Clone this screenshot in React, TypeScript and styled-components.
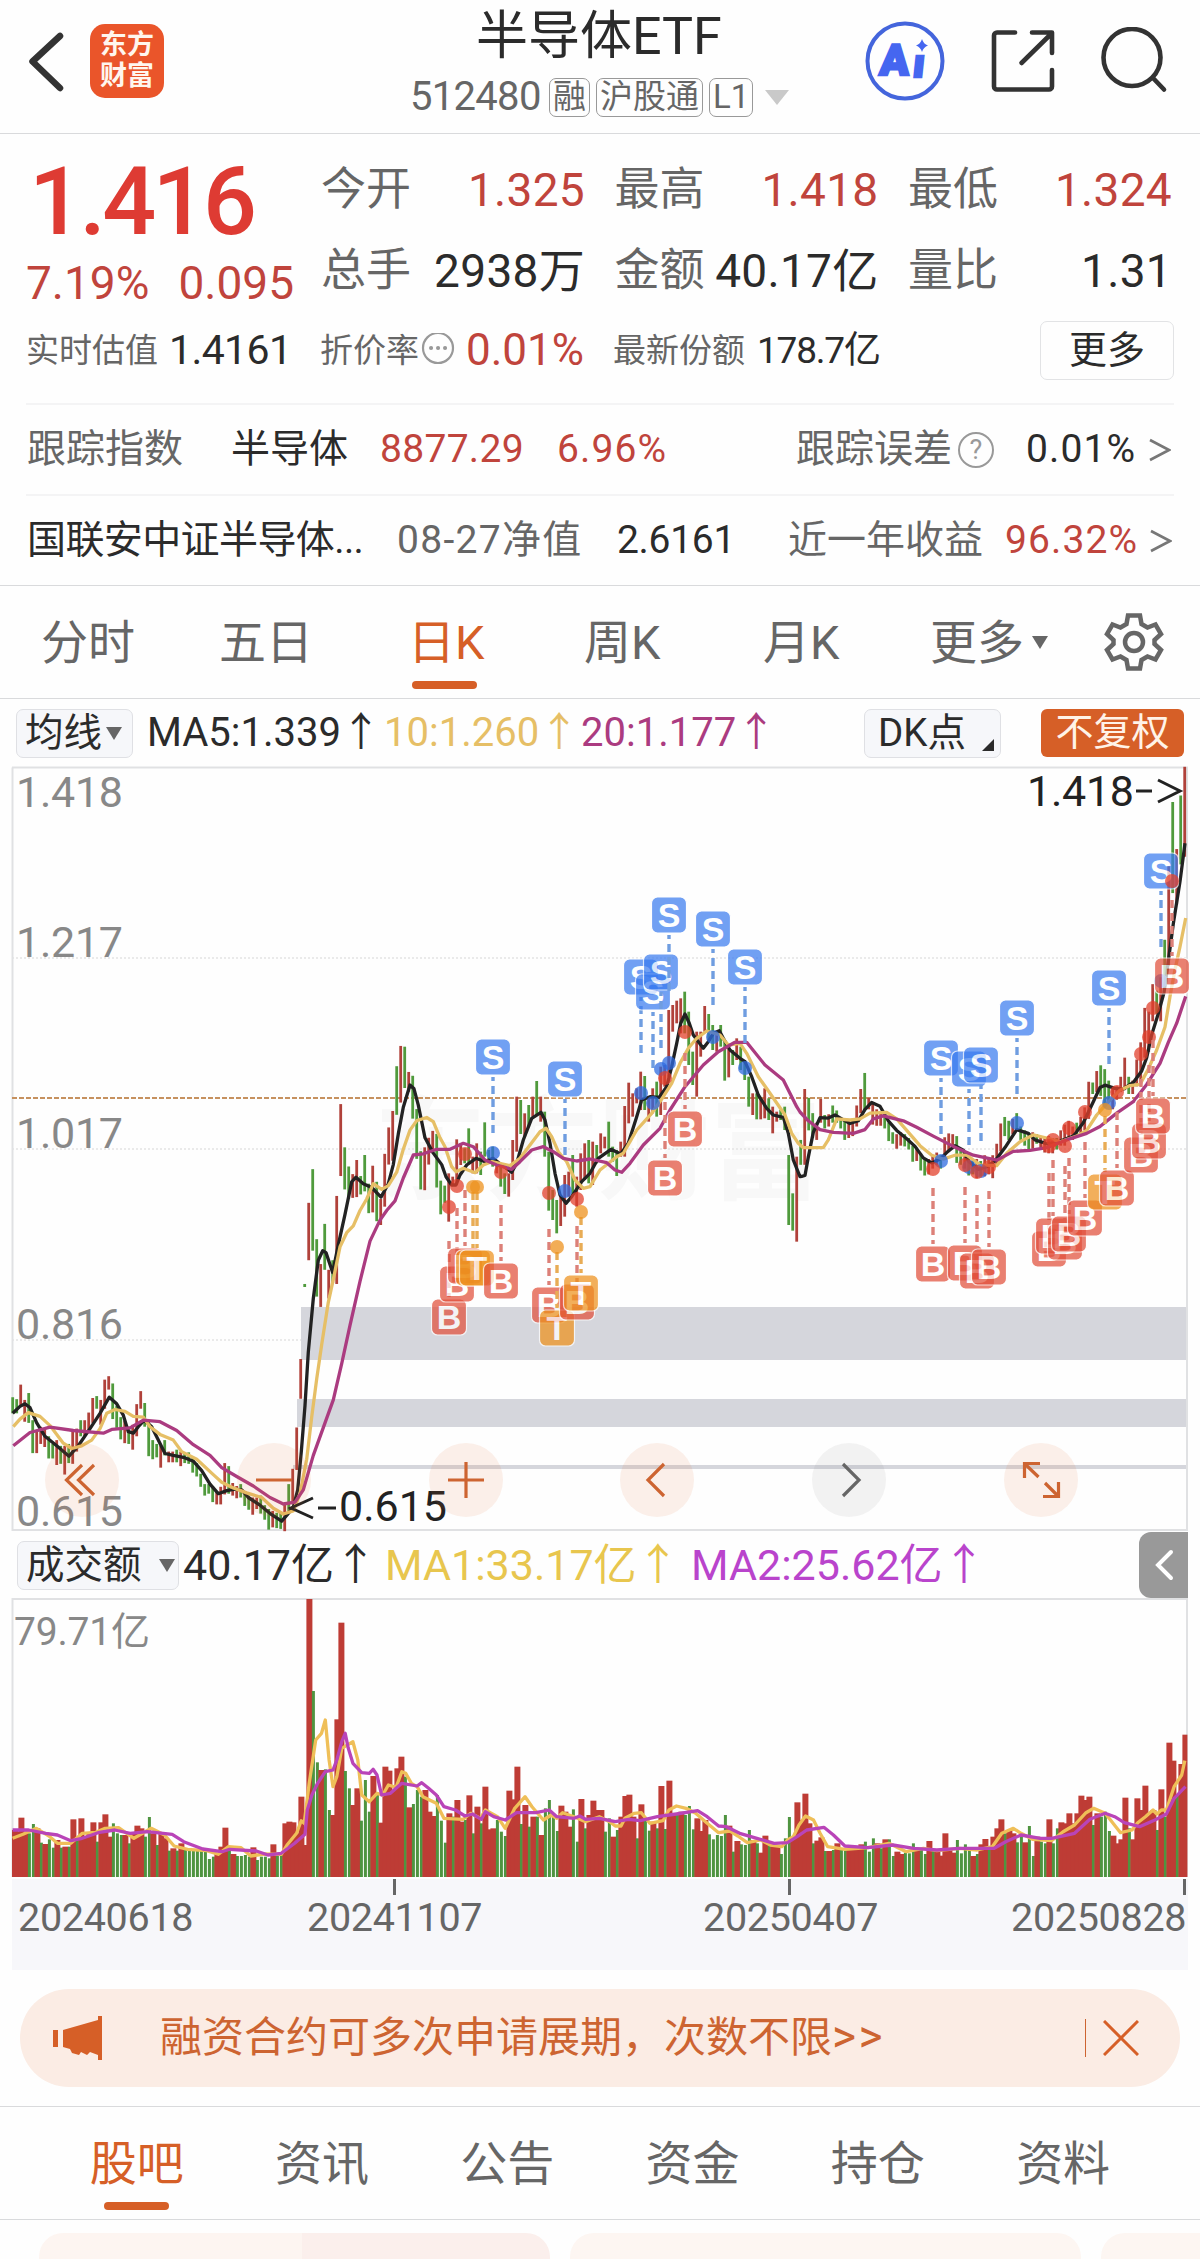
import { Fragment } from 'react';
import styled, { createGlobalStyle, css } from 'styled-components';

const GlobalStyle = createGlobalStyle`
	:root {
		--ink: #2b2b2b;
		--gray: #666;
		--red: #c0443c;
		--orange: #d65f27;
		--line: #d9dadc;
		--yellow: #e6bf66;
		--purple: #ab3b80;
	}

	* {
		box-sizing: border-box;
	}

	body {
		margin: 0;
		background: #fefefe;
		color: var(--ink);
		font-family: Roboto, 'Noto Sans CJK SC', sans-serif;
		line-height: 1;
	}
`;

/* ---------- chart data ---------- */

interface Segment {
	start: number;
	originX: number;
	originY: number;
	unitX: number;
	unitY: number;
}

const STEP = 4;
const FIRST_X = 12.7;

// three stretches of the k-line, each on its own scale
const LEFT: Segment = { start: 0, originX: 0, originY: 1000, unitX: 3, unitY: 2.613 };
const MIDDLE: Segment = { start: 109, originX: 370, originY: 880, unitX: 3, unitY: 3 };
const RIGHT: Segment = { start: 197, originX: 800, originY: 740, unitX: 3, unitY: 2.613 };

const VOL_LEFT: Segment = { start: 0, originX: 0, originY: 1500, unitX: 2.613, unitY: 3 };
const VOL_RIGHT: Segment = { start: 147, originX: 600, originY: 1500, unitX: 2.613, unitY: 3 };

const candleData: [Segment, string][] = [
	[
		LEFT,
		`1038-1080g 1043-1080g 1005-1060r 1045-1102r 1027-1105g 1098-1184g 1125-1184r 1115-1160r 1120-1168r 1140-1198g
		1160-1198g 1150-1215r 1165-1212g 1165-1240r 1160-1210g 1125-1212r 1120-1180r 1098-1140g 1098-1140r 1078-1128r
		1040-1105r 1035-1068g 1045-1110r 992-1068r 983-1018r 1002-1095g 1060-1118g 1090-1148g 1100-1158r 1115-1160g
		1110-1175r 1056-1140r 1022-1068r 1053-1115g 1100-1192g 1150-1200g 1160-1195g 1165-1222r 1150-1190g 1180-1208r
		1180-1208r 1175-1208g 1180-1218r 1185-1210g 1182-1212g 1195-1235g 1210-1245g 1238-1272g 1265-1295g 1265-1290g
		1270-1312g 1285-1318r 1272-1318r 1210-1292r 1218-1290g 1262-1295r 1270-1302r 1265-1300g 1285-1322g 1295-1332g
		1300-1345r 1300-1330r 1295-1342g 1320-1358g 1330-1384g 1335-1378r 1340-1380g 1340-1382g 1315-1388r 1265-1335g
		1225-1315r 1117-1228r 938-1042r 742-750g 530-680r 442-655g 625-775g 690-802r 585-705g 705-780r
		680-740g 512-742r 272-460r 385-495g 435-520g 455-517r 418-515r 460-508g 405-500g 480-557g
		433-555r 475-578g 520-588r 402-540r 333-430r 290-420r 173-300g 120-268r 122-230g 188-240r
		198-310g 285-415g 395-495g 385-497r 360-430r 342-400r 350-490g 472-560g 485-530g`,
	],
	[
		MIDDLE,
		`880-1025r 890-915r 778-915r 790-855r 805-850g 745-850g 830-880r 790-880r 815-885g 727-830g
		810-850g 800-860g 840-880r 860-920g 880-942g 880-950r 780-900r 650-815r 660-762g 700-770r
		675-740g 650-710r 603-705g 650-725r 695-830g 815-992g 930-1020g 960-1060g 945-1038r 885-1010r
		875-950r 825-945g 890-980r 820-930r 790-900r 780-910g 785-915r 795-850g 760-820r 770-805r
		725-830g 800-845g 810-888g 785-830r 678-830r 608-730r 640-710r 625-670r 575-690r 588-690g
		650-725r 625-700r 605-710g 560-705r 555-620r 390-590r 375-455r 362-430r 355-460r 335-460g
		395-555g 515-615g 455-650r 455-530r 378-455r 402-480g 435-510g 460-515r 435-500g 480-602g
		505-592r 510-555g 475-540r 500-570g 540-600g 590-680g 640-705r 640-718g 655-718r 625-715r
		655-720g 680-760r 695-725r 690-720g 680-750g 825-1035g 940-1052g 830-1085r`,
	],
	[
		RIGHT,
		`1045-1110g 912-1110r 935-1020g 975-1040g 1000-1045r 938-1000r 980-1015g 978-1010r 955-1000g 968-1000g
		985-1015g 990-1045g 995-1040r 990-1035r 955-1010r 912-975r 870-970g 935-965r 950-1005r 965-1008r
		970-1008r 985-1015g 1000-1048g 1025-1055g 1030-1068r 1025-1060r 1030-1062g 1040-1070g 1060-1102g 1065-1100r
		1080-1125g 1095-1138g 1095-1135r 1085-1120r 1078-1110r 1085-1120g 1038-1095r 1028-1075r 1030-1060r 1035-1105g
		1070-1110g 1085-1120r 1090-1138g 1100-1135g 1095-1145r 1100-1140g 1085-1140r 1090-1135r 1085-1145r 1055-1110r
		1002-1075r 985-1035g 995-1045g 990-1030r 975-1020g 1010-1045g 1020-1060g 1025-1075g 1025-1068r 1030-1055g
		1035-1065r 1040-1078r 1035-1080r 1040-1080r 1040-1070g 1020-1060r 1005-1060r 995-1045r 1010-1045r 1000-1040g
		985-1035r 960-1020r 893-990r 895-925g 865-920r 850-930g 860-960g 890-945g 910-965r 905-940r
		880-920r 830-915r 880-925g 890-925r 835-905r 790-900r 700-830r 710-815r 638-735r 655-715g
		620-735r 522-650g 330-590r 162-400g 285-430r 145-325g 70-305r`,
	],
];

const ma5: [Segment, string][] = [
	[
		LEFT,
		`38,1080 60,1062 75,1055 90,1065 110,1105 135,1140 170,1165 207,1192 235,1165 270,1120 300,1080 328,1038 350,1055
		370,1085 385,1128 400,1132 415,1115 433,1098 455,1115 475,1150 495,1185 520,1190 550,1195 580,1205 605,1230
		630,1265 655,1290 680,1282 705,1278 725,1280 745,1300 780,1320 815,1345 845,1362 862,1345 880,1325 893,1280
		904,1180 915,1060 925,920 940,780 955,680 968,655 978,660 998,712 1015,640 1035,560 1055,475 1068,463 1090,480
		1115,490 1143,515 1165,480 1180,430 1195,350 1210,280 1230,222 1242,232 1255,275 1275,360 1300,400 1325,430`,
	],
	[
		MIDDLE,
		`228,890 245,915 258,915 270,885 290,855 318,835 345,845 369,835 395,855 425,877 440,850 460,780 485,715 513,697
		525,720 540,790 555,880 570,945 588,970 605,950 635,905 660,880 685,835 723,808 752,822 775,790 800,710 815,660
		840,650 868,652 890,620 905,560 920,490 932,430 945,402 958,430 970,465 1000,505 1015,485 1030,460 1048,452
		1060,475 1080,510 1110,535 1125,545 1145,590 1165,645 1190,685 1210,705 1240,712 1255,760 1270,840 1290,890`,
	],
	[
		RIGHT,
		`5,1140 15,1138 25,1090 40,1025 60,987 85,988 105,980 125,990 150,1002 175,995 195,965 215,947 240,957 265,995
		290,1020 320,1042 345,1062 370,1092 395,1105 420,1095 440,1078 465,1060 490,1072 505,1100 535,1122 560,1115
		585,1100 615,1065 650,1018 685,1028 705,1045 740,1055 775,1050 820,1035 850,1000 880,945 900,908 915,902
		945,910 970,912 1000,895 1025,865 1040,830 1055,770 1075,715 1092,660 1103,590 1120,480 1140,370 1155,270`,
	],
];

const ma10: [Segment, string][] = [
	[
		LEFT,
		`40,1115 60,1095 85,1078 120,1088 150,1112 190,1158 215,1172 245,1165 275,1150 300,1120 320,1080 345,1070
		375,1075 400,1088 430,1090 450,1115 480,1135 520,1150 545,1180 590,1200 640,1240 665,1260 700,1275 740,1288
		785,1300 820,1328 850,1343 880,1335 900,1290 920,1200 935,1090 950,990 965,900 985,790 1000,730 1020,645
		1040,608 1060,590 1080,550 1100,520 1120,480 1145,495 1165,485 1190,450 1210,390 1230,340 1250,315 1280,307
		1300,318 1320,360`,
	],
	[
		MIDDLE,
		`225,800 245,860 258,875 280,865 315,878 340,855 365,845 420,857 450,835 480,795 510,755 528,745 545,770 565,815
		590,845 615,900 640,925 660,920 690,870 740,830 760,820 800,750 845,700 880,650 905,610 930,550 955,505 980,475
		1010,453 1050,465 1075,495 1110,490 1130,520 1165,590 1200,640 1245,705 1265,760 1285,790`,
	],
	[
		RIGHT,
		`0,1058 10,1065 70,1065 85,1045 110,990 150,993 180,990 210,975 260,973 290,990 320,1020 360,1060 395,1085
		430,1095 465,1085 500,1085 540,1110 590,1112 620,1080 660,1050 700,1032 740,1040 780,1050 830,1035 860,1020
		890,980 920,950 960,915 990,903 1020,900 1045,860 1070,810 1095,750 1110,670 1125,600 1140,540 1157,465`,
	],
];

const ma20: [Segment, string][] = [
	[
		LEFT,
		`40,1165 90,1130 150,1116 220,1125 310,1132 335,1122 390,1118 430,1098 480,1102 530,1125 580,1162 630,1190
		665,1222 710,1245 760,1270 810,1300 850,1317 885,1312 910,1280 940,1190 1000,1045 1025,950 1050,850 1080,735
		1110,630 1140,575 1160,550 1185,525 1210,465 1240,405 1270,402 1310,390`,
	],
	[
		MIDDLE,
		`240,808 280,790 310,800 345,840 380,855 425,868 450,845 485,810 520,800 550,815 580,835 620,843 660,837 710,848
		735,870 755,877 780,850 820,795 870,745 900,690 945,620 1000,555 1045,515 1095,487 1130,487 1185,555 1240,600
		1280,680`,
	],
	[
		RIGHT,
		`0,972 25,995 60,1018 100,1025 160,1028 195,1018 220,990 250,982 310,995 350,1012 400,1035 460,1062 520,1085
		590,1098 640,1075 690,1072 740,1065 800,1045 860,1028 900,1010 950,975 1000,945 1040,900 1080,845 1105,790
		1130,740 1157,670`,
	],
];

const volumeData: [Segment, string][] = [
	[
		VOL_LEFT,
		`990r 995r 953r 995r 1000g 972g 985r 1028g 1032r 1018g 1043g 1020r 1043g 1040r 1040g 958r 1020g 955r 1010r 1000r
		967r 1025g 967r 943r 1010r 970g 1000g 1005g 1005r 1030g 1000r 977r 985r 1010g 951g 1000r 1035g 1000r 1015r 1052g
		1045r 1052g 1030r 1050g 1050g 1050g 1050g 1050g 1055g 1077g 1070g 1062r 1040r 983r 1045g 1062r 1068g 1068g 1065g
		1070g 1042r 1080g 1070g 1070g 1075g 1033r 1068g 1060g 970r 965r 967r 1000r 890r 1035r 297r 573g 787g 810r 808g
		930g 945r 658r 368r 813g 865g 915r 865r 962g 840g 935g 828r 880g 968r 800r 812r 870r 805r 770r 830g 922r 912g
		870g 890g 870r 935r 948r 885g 962g 1028g 940r 950g 900r 965r 960g 886r 1000g 920r 970g 860r 988r 985r 960g 995g
		1008g 872r 898r 800r 972g 915r 980g 950r 950g 1005r 925g 900g 940g 993g 917r 935r 980r 928g 1025g 897r 985g 945r
		902r 930r`,
	],
	[
		VOL_RIGHT,
		`930r 995g 955g 1010r 990g 950r 888r 884r 950r 1015g 913r 960g 992g 965r 985g 858r 987g 842r 945r 945g 935r 945g
		918g 988g 955r 993r 960r 1003g 1018g 1005g 1008g 945g 977r 1055g 1023r 1033g 1035g 990g 1020r 1030g 1058r 1007r
		1030g 1030r 1035r 1062g 1015g 951g 1020r 907r 960r 881r 970r 1030g 1022r 1012r 1053g 1053r 1050g 1030r 1050g
		1045g 1050r 1040r 1040r 1033r 1025g 1055g 1015g 1030r 1045g 1018r 1018g 1068g 1055r 1062r 1058g 1060g 1030g
		1045r 1050g 1062g 1023r 1050g 1050r 1067r 1000r 1045r 1058r 1020g 1060g 1033g 1045g 1068r 1062g 1033r 1017r
		1050g 1010r 985r 958r 1000g 990r 1000r 1027g 1010g 1027r 978g 1068g 1010r 1025g 1030g 958r 1030g 985g 967r 970r
		940r 970r 940r 887r 900r 890r 975g 940r 950g 935g 993g 1007r 1030r 1018r 893r 985g 1018r 895r 930r 857r 940r
		930r 990g 868r 950g 728r 782r 885g 792r 704r`,
	],
];

const volumeMa1: [Segment, string][] = [
	[
		VOL_LEFT,
		`33,1015 60,1003 95,985 130,1010 150,1030 185,1030 215,1000 250,997 275,985 310,983 350,1015 395,985 430,1005
		455,1038 490,1048 540,1052 570,1063 597,1040 630,1043 655,1068 690,1062 735,1063 750,1035 775,1000 787,962
		795,970 808,850 825,720 840,700 850,660 860,780 870,860 880,830 893,745 922,725 935,780 945,885 965,905 985,880
		1000,885 1015,855 1035,862 1050,815 1060,820 1075,850 1090,860 1105,890 1140,910 1160,955 1210,958 1230,940
		1255,955 1268,930 1300,950 1320,985 1345,925 1372,890 1390,920 1420,960 1440,945 1455,955 1470,938 1500,950
		1530,965 1566,950`,
	],
	[
		VOL_RIGHT,
		`25,965 40,978 55,978 65,955 90,940 108,938 130,970 165,962 180,930 200,918 225,925 250,940 280,970 310,998
		340,993 360,1008 385,1028 420,1020 445,1035 475,1040 490,1020 505,1010 520,975 537,948 558,960 575,1000
		595,1040 640,1048 700,1043 755,1030 800,1055 845,1045 880,1052 940,1045 985,1050 1025,1040 1050,1000 1080,985
		1100,1000 1130,1018 1180,1022 1210,995 1240,975 1270,938 1290,925 1320,940 1360,998 1390,990 1405,968 1425,950
		1445,930 1455,942 1467,930 1480,930 1500,860 1520,825 1528,782`,
	],
];

const volumeMa2: [Segment, string][] = [
	[
		VOL_LEFT,
		`33,990 75,990 120,1000 150,1005 185,1022 215,1015 260,997 300,990 340,1000 385,995 450,1003 480,1025 530,1047
		580,1055 600,1048 670,1053 700,1065 735,1060 770,1030 797,1003 803,930 815,885 830,850 850,815 870,810 880,780
		893,725 902,700 910,745 922,790 945,818 965,820 975,808 985,825 997,885 1020,880 1050,850 1090,858 1102,848
		1120,865 1140,885 1160,920 1190,930 1215,948 1235,942 1258,958 1268,935 1290,950 1320,960 1350,938 1400,938
		1435,930 1455,950 1500,955 1515,948 1530,958 1566,955`,
	],
	[
		VOL_RIGHT,
		`40,965 75,958 105,962 150,950 200,942 255,932 280,950 310,978 330,980 365,1000 410,1015 455,1030 490,1028
		515,1010 540,990 585,982 610,1005 640,1038 700,1043 765,1035 820,1045 880,1050 940,1045 1030,1045 1060,1025
		1100,1005 1150,1015 1180,1015 1240,1000 1280,958 1320,940 1345,950 1370,968 1410,980 1450,960 1480,942 1500,895
		1530,860`,
	],
];

type Side = 'S' | 'B' | 'T';

// side, x, badge y, point y
const trades: [Side, number, number, number][] = [
	['S', 493, 1057, 1153],
	['S', 565, 1079, 1191],
	['S', 641, 977, 1093],
	['S', 653, 992, 1103],
	['S', 661, 972, 1069],
	['S', 669, 915, 1063],
	['S', 713, 929, 1037],
	['S', 745, 967, 1068],
	['S', 941, 1058, 1161],
	['S', 969, 1069, 1167],
	['S', 981, 1065, 1171],
	['S', 1017, 1018, 1123],
	['S', 1109, 988, 1103],
	['S', 1161, 871, 981],
	['B', 449, 1317, 1207],
	['B', 457, 1284, 1186],
	['B', 465, 1266, 1154],
	['T', 473, 1268, 1187],
	['T', 477, 1268, 1187],
	['B', 501, 1281, 1172],
	['B', 549, 1305, 1193],
	['T', 557, 1328, 1247],
	['B', 577, 1302, 1199],
	['T', 581, 1293, 1212],
	['B', 665, 1178, 1078],
	['B', 685, 1129, 1032],
	['B', 933, 1264, 1169],
	['B', 965, 1263, 1165],
	['B', 977, 1271, 1172],
	['B', 989, 1267, 1167],
	['B', 1049, 1249, 1146],
	['B', 1053, 1236, 1140],
	['B', 1065, 1242, 1146],
	['B', 1069, 1234, 1128],
	['B', 1085, 1218, 1112],
	['T', 1105, 1192, 1110],
	['B', 1117, 1188, 1092],
	['B', 1141, 1155, 1054],
	['B', 1149, 1141, 1037],
	['B', 1153, 1116, 1008],
	['B', 1172, 976, 881],
];

const sideColors: Record<Side, { badge: string; dot: string; dash: string }> = {
	S: { badge: '#3b7cf0', dot: '#2f6be0', dash: '#6f9de0' },
	B: { badge: '#e2503c', dot: '#e2402c', dash: '#dc8078' },
	T: { badge: '#ee921d', dot: '#ee921d', dash: '#e8ac55' },
};

const RED = '#b0413a';
const GREEN = '#4f9a3c';

const place = ([seg, text]: [Segment, string]) =>
	text
		.trim()
		.split(/\s+/)
		.map((pair) => {
			const [x, y] = pair.split(',').map(Number);
			return [seg.originX + x / seg.unitX, seg.originY + y / seg.unitY];
		});

const toPoints = (line: [Segment, string][]) =>
	line
		.flatMap(place)
		.map(([x, y]) => `${x.toFixed(1)},${y.toFixed(1)}`)
		.join(' ');

const candles = candleData.flatMap(([seg, text]) =>
	text
		.trim()
		.split(/\s+/)
		.map((item, i) => {
			const [top, bottom] = item.slice(0, -1).split('-').map(Number);
			return {
				x: FIRST_X + (seg.start + i) * STEP,
				top: seg.originY + top / seg.unitY,
				bottom: seg.originY + bottom / seg.unitY,
				up: item.endsWith('r'),
			};
		})
);

const volumes = volumeData.flatMap(([seg, text]) =>
	text
		.trim()
		.split(/\s+/)
		.map((item, i) => ({
			x: 13.4 + (seg.start + i) * STEP,
			top: seg.originY + parseInt(item) / seg.unitY,
			up: item.endsWith('r'),
		}))
);

/* ---------- charts ---------- */

function PriceChart() {
	return (
		<ChartSvg width='1200' height='767' viewBox='0 765 1200 767'>
			<text x='374' y='1191' fontSize='112' fontWeight='700' fill='#f8f8f8'>
				东方财富
			</text>
			{[958, 1149, 1340].map((y) => (
				<line key={y} x1='12' x2='1186' y1={y} y2={y} stroke='#e4e4e4' strokeWidth='1.5' strokeDasharray='2 2' />
			))}
			<g fill='#d5d6dc'>
				<rect x='301' y='1307' width='886' height='53' />
				<rect x='297' y='1399' width='890' height='28' />
				<rect x='293' y='1465' width='894' height='4' />
			</g>
			<path d='M12 767.5H1187V1530H12.5V767.5' fill='none' stroke='#e0e1e3' strokeWidth='2' />
			<line x1='12' x2='1186' y1='1098' y2='1098' stroke='#c6915f' strokeWidth='1.8' strokeDasharray='5 2' />

			<g fontSize='43' fill='#888'>
				{[
					['1.418', 807],
					['1.217', 957],
					['1.017', 1148],
					['0.816', 1339],
					['0.615', 1526],
				].map(([label, y]) => (
					<text key={label} x='16' y={y} textLength='107'>
						{label}
					</text>
				))}
			</g>

			{candles.map(({ x, top, bottom, up }) => (
				<line key={x} x1={x} x2={x} y1={top} y2={bottom} stroke={up ? RED : GREEN} strokeWidth='2.8' />
			))}
			<g fill='none' strokeWidth='3.3' strokeLinejoin='round'>
				<polyline points={toPoints(ma5)} stroke='#222' />
				<polyline points={toPoints(ma10)} stroke='#e6bf66' />
				<polyline points={toPoints(ma20)} stroke='#ab3b80' />
			</g>

			{trades.map(([side, x, badgeY, pointY], i) => {
				const { badge, dot, dash } = sideColors[side];
				const away = side === 'S' ? 1 : -1;
				return (
					<Fragment key={i}>
						<line
							x1={x}
							x2={x}
							y1={badgeY + away * 20}
							y2={badgeY + away * 81}
							stroke={dash}
							strokeWidth='3.4'
							strokeDasharray='8 5'
							strokeDashoffset='4'
						/>
						<circle cx={x} cy={pointY} r='7' fill={dot} opacity='0.75' />
						<g opacity='0.72'>
							<rect x={x - 17.5} y={badgeY - 18} width='35' height='36' rx='6' fill={badge} stroke='#fff' strokeWidth='1.2' />
							<text
								x={x}
								y={badgeY + 12}
								fontSize='34'
								fontWeight='700'
								fontFamily='Liberation Sans, sans-serif'
								textAnchor='middle'
								fill='#fff'
							>
								{side}
							</text>
						</g>
					</Fragment>
				);
			})}

			<g fontSize='43' fill='#222'>
				<text x='1027' y='806' textLength='107'>
					1.418
				</text>
				<path d='M1136 791h16M1158 780l22 11-22 11' fill='none' stroke='#222' strokeWidth='3' />
				<text x='339' y='1521' textLength='108'>
					0.615
				</text>
				<path d='M318 1508h18M313 1498l-22 10 22 10' fill='none' stroke='#222' strokeWidth='3' />
			</g>
		</ChartSvg>
	);
}

function VolumeChart() {
	return (
		<ChartSvg width='1200' height='281' viewBox='0 1598 1200 281'>
			<path d='M12.5 1877V1599H1187V1877' fill='none' stroke='#e0e1e3' strokeWidth='2' />
			<text x='14' y='1645' fontSize='39' fill='#888' textLength='136'>
				79.71亿
			</text>
			{volumes.map(({ x, top, up }) =>
				up ? (
					<rect key={x} x={Math.max(x - 3, 12)} y={top} width={x > 1183 ? 5 : 6} height={1877 - top} fill='#be3c35' />
				) : (
					<rect key={x} x={x - 1.5} y={top} width='3' height={1877 - top} fill='#4f9440' />
				)
			)}
			<g fill='none' strokeWidth='3.3' strokeLinejoin='round'>
				<polyline points={toPoints(volumeMa1)} stroke='#efbf58' />
				<polyline points={toPoints(volumeMa2)} stroke='#b944b8' />
			</g>
		</ChartSvg>
	);
}

/* ---------- page ---------- */

export default function App() {
	return (
		<Page>
			<GlobalStyle />
			<Header>
				<HeaderSide>
					<svg width='40' height='62' viewBox='28 30 40 62' fill='none' stroke='#333' strokeWidth='6.5'>
						<path d='M60 36 32.500 61.500 60 88' strokeLinecap='round' strokeLinejoin='round' />
					</svg>
					<Logo>
						<span>东方</span>
						<span>财富</span>
					</Logo>
				</HeaderSide>
				<Heading>
					<Title>半导体ETF</Title>
					<Subtitle>
						<Code>512480</Code>
						<Tag>融</Tag>
						<Tag>沪股通</Tag>
						<Tag>L1</Tag>
						<Caret $size={12} $height={15} $color='#c9c9c9' $left={6} />
					</Subtitle>
				</Heading>
				<HeaderIcons>
					<svg width='80' height='80' viewBox='865 21 80 80'>
						<circle cx='905' cy='61' r='37.500' fill='none' stroke='#4465dc' strokeWidth='4' />
						<g fill='#4566f0' stroke='#4566f0' strokeWidth='2.500' fontFamily='Roboto, sans-serif' fontWeight='900' fontSize='43'>
							<text transform='translate(879 75) skewX(-4)'>A</text>
							<text transform='translate(912 77) skewX(-6)' fontSize='40'>ı</text>
						</g>
						<path d='M922 39q1.500 5 6 6.500-4.500 1.500-6 6.500-1.500-5-6-6.500 4.500-1.500 6-6.500z' fill='#4566f0' />
					</svg>
					<svg width='66' height='66' viewBox='989 28 66 66' fill='none' stroke='#333' strokeWidth='4.600' strokeLinecap='round'>
						<path d='M1014 32.500H996a3 3 0 0 0-3 3V86.500a3 3 0 0 0 3 3H1048a3 3 0 0 0 3-3V70' />
						<path d='M1031 32.500H1051V53M1050 34 1020.500 63' strokeLinejoin='round' />
					</svg>
					<svg width='68' height='68' viewBox='1102 28 68 68' fill='none' stroke='#333' strokeWidth='4.600' strokeLinecap='round'>
						<circle cx='1133' cy='58.500' r='28.500' />
						<path d='M1154 79 1165 90.500' />
					</svg>
				</HeaderIcons>
			</Header>

			<Quote>
				<QuoteTop>
					<PriceBox>
						<Price>1.416</Price>
						<Change>
							<span>7.19%</span>
							<span>0.095</span>
						</Change>
					</PriceBox>
					<Stats>
						<Stat label='今开' value='1.325' up />
						<Stat label='最高' value='1.418' up />
						<Stat label='最低' value='1.324' up />
						<Stat label='总手' value='2938万' />
						<Stat label='金额' value='40.17亿' />
						<Stat label='量比' value='1.31' />
					</Stats>
				</QuoteTop>
				<Estimates>
					<Estimate $width={294}>
						<Small>实时估值</Small>
						<Figure $size={41} $spacing={-0.6}>
							1.4161
						</Figure>
					</Estimate>
					<Estimate $width={293}>
						<Small>折价率</Small>
						<svg width='36' height='34' viewBox='-2 0 36 34' fill='none' stroke='#999' strokeWidth='2.200'>
							<circle cx='17' cy='15' r='15' />
							<path d='M10 15h.1M17 15h.1M24 15h.1' strokeWidth='4' strokeLinecap='round' />
						</svg>
						<Figure $size={44} $red $left={11}>
							0.01%
						</Figure>
					</Estimate>
					<Estimate $width={427}>
						<Small>最新份额</Small>
						<Figure $size={37} $left={12} $spacing={-1.2}>
							178.7亿
						</Figure>
					</Estimate>
					<MoreButton>更多</MoreButton>
				</Estimates>
				<Track>
					<TrackText $width={204} $gray>
						跟踪指数
					</TrackText>
					<TrackText $width={149}>半导体</TrackText>
					<TrackText $width={177} $red $spacing={0.3}>
						8877.29
					</TrackText>
					<TrackText $width={239} $red $spacing={1.1}>
						6.96%
					</TrackText>
					<TrackText $width={162} $gray>
						跟踪误差
					</TrackText>
					<HelpMark>?</HelpMark>
					<TrackText $width={123} $left={32} $spacing={1.1}>
						0.01%
					</TrackText>
					<Arrow />
				</Track>
				<Track>
					<TrackText $width={370} $spacing={-0.6}>
						国联安中证半导体...
					</TrackText>
					<TrackText $width={220} $gray $spacing={1.3}>
						08-27净值
					</TrackText>
					<TrackText $width={171} $spacing={-0.3}>
						2.6161
					</TrackText>
					<TrackText $width={217} $gray>
						近一年收益
					</TrackText>
					<TrackText $width={145} $red $spacing={1.1}>
						96.32%
					</TrackText>
					<Arrow />
				</Track>
			</Quote>

			<PeriodTabs>
				<Period $width={178}>分时</Period>
				<Period $width={189}>五日</Period>
				<Period $width={176} $active>
					日K
				</Period>
				<Period $width={179}>周K</Period>
				<Period $width={167}>月K</Period>
				<Period $width={174}>
					更多
					<Caret $size={8.5} $height={13} $color='#666' $left={8} />
				</Period>
				<svg width='60' height='60' viewBox='0 0 60 60' fill='none' stroke='#666' strokeWidth='4.500'>
					<path d='M24 3.500H36L37.500 12 43.500 15.500 51.500 12.500 57 22 50.500 28V32L57 38 51.500 47.500 43.500 44.500 37.500 48 36 56.500H24L22.500 48 16.500 44.500 8.500 47.500 3 38 9.500 32V28L3 22 8.500 12.500 16.500 15.500 22.500 12Z' />
					<circle cx='30' cy='30' r='9' />
				</svg>
			</PeriodTabs>

			<Indicators>
				<Select $width={117}>
					均线
					<Caret $size={8} $height={13} $color='#666' $left={4} />
				</Select>
				<Indicator $left={14} $width={237}>
					MA5:1.339<Up>↑</Up>
				</Indicator>
				<Indicator $width={197} $color='var(--yellow)'>
					10:1.260<Up>↑</Up>
				</Indicator>
				<Indicator $width={283} $color='var(--purple)'>
					20:1.177<Up>↑</Up>
				</Indicator>
				<Select $width={137} $corner>
					DK点
				</Select>
				<Adjust>不复权</Adjust>
			</Indicators>

			<ChartBox>
				<PriceChart />
				<Controls>
					<Control>
						<svg width='74' height='74' viewBox='0 0 74 74'>
							<path d='M37 22 21.500 37 37 52M49 22 33.500 37 49 52' />
						</svg>
					</Control>
					<Control>
						<svg width='74' height='74' viewBox='0 0 74 74'>
							<path d='M19 37h36' />
						</svg>
					</Control>
					<Control>
						<svg width='74' height='74' viewBox='0 0 74 74'>
							<path d='M19 37h36M37 19v36' />
						</svg>
					</Control>
					<Control>
						<svg width='74' height='74' viewBox='0 0 74 74'>
							<path d='M44 21 28 37 44 53' />
						</svg>
					</Control>
					<Control $muted>
						<svg width='74' height='74' viewBox='0 0 74 74'>
							<path d='M31 21 47 37 31 53' />
						</svg>
					</Control>
					<Control>
						<svg width='74' height='74' viewBox='0 0 74 74'>
							<path d='M20.500 35V20.500H36M21.500 21.500 34.500 34M54.500 39V53.500H39M53.500 52.500 41 40' />
						</svg>
					</Control>
				</Controls>
			</ChartBox>

			<VolumeBar>
				<Select $width={162}>
					成交额
					<Caret $size={8} $height={13} $color='#666' $left={17} />
				</Select>
				<Indicator $size={43} $left={4} $width={202}>
					40.17亿<Up>↑</Up>
				</Indicator>
				<Indicator $size={43} $width={306} $color='#e8c64e'>
					MA1:33.17亿<Up>↑</Up>
				</Indicator>
				<Indicator $size={43} $width={448} $color='#b944cc'>
					MA2:25.62亿<Up>↑</Up>
				</Indicator>
				<Collapse>
					<svg width='22' height='34' viewBox='0 0 22 34' fill='none' stroke='#fff' strokeWidth='4'>
						<path d='M18 4 5 17 18 30' strokeLinecap='round' />
					</svg>
				</Collapse>
			</VolumeBar>
			<VolumeChart />
			<Dates>
				<DateLabel $left={6}>20240618</DateLabel>
				<DateLabel $left={116} $tick={86}>
					20241107
				</DateLabel>
				<DateLabel $left={223} $tick={85}>
					20250407
				</DateLabel>
				<DateLabel $left={135} $tick={172}>
					20250828
				</DateLabel>
			</Dates>

			<Notice>
				<svg width='50' height='44' viewBox='0 0 50 44' fill='#d65f27'>
					<path d='M0 14h5v17H0zM10 14 45 4V0h4v44h-4v-5L37 36 34 39 28 36 26 39 19 37 17 33 10 31z' />
				</svg>
				<NoticeText>
					融资合约可多次申请展期，次数不限<Angles>&gt;&gt;</Angles>
				</NoticeText>
				<NoticeClose>
					<svg width='36' height='36' viewBox='0 0 36 36' stroke='#d65f27' strokeWidth='3'>
						<path d='M1 1 35 35M35 1 1 35' />
					</svg>
				</NoticeClose>
			</Notice>

			<Sections>
				<Section $active>股吧</Section>
				<Section>资讯</Section>
				<Section>公告</Section>
				<Section>资金</Section>
				<Section>持仓</Section>
				<Section>资料</Section>
			</Sections>

			<Cards>
				<Card $split />
				<Card />
				<Card />
			</Cards>
		</Page>
	);
}

interface StatProps {
	label: string;
	value: string;
	up?: boolean;
}

function Stat({ label, value, up }: StatProps) {
	return (
		<StatRow>
			<StatLabel>{label}</StatLabel>
			<StatValue $up={up}>{value}</StatValue>
		</StatRow>
	);
}

function Arrow() {
	return (
		<svg width='22' height='26' viewBox='0 0 22 26' fill='none' stroke='#777' strokeWidth='2.600'>
			<path d='M1 3 20 13 1 23' />
		</svg>
	);
}

const Page = styled.main`
	width: 1200px;
	height: 2259px;
	overflow: hidden;
	background: #fefefe;
	white-space: nowrap;

	svg {
		flex: none;
	}
`;

const ChartSvg = styled.svg`
	display: block;
`;

const Header = styled.header`
	height: 134px;
	display: flex;
	border-bottom: 1.5px solid var(--line);
`;

const HeaderSide = styled.div`
	width: 410px;
	padding-left: 28px;
	height: 122px;
	display: flex;
	align-items: center;
	gap: 22px;
`;

const Logo = styled.div`
	width: 74px;
	height: 74px;
	border-radius: 15px;
	background: #ea552a;
	color: #fff6ee;
	font-size: 27px;
	font-weight: 700;
	display: flex;
	flex-direction: column;
	align-items: center;
	justify-content: center;
	gap: 4px;
`;

const Heading = styled.div`
	display: flex;
	flex-direction: column;
	width: 455px;
`;

const Title = styled.h1`
	margin: 0;
	height: 70px;
	padding-left: 66px;
	font-size: 52px;
	font-weight: 400;
	line-height: 73px;
`;

const Subtitle = styled.div`
	display: flex;
	align-items: center;
	height: 54px;
	gap: 6px;
	color: var(--gray);
`;

const Code = styled.span`
	font-size: 40px;
	letter-spacing: -0.7px;
	width: 133px;
`;

const Tag = styled.span`
	height: 39px;
	padding: 0 3px;
	border: 1.5px solid #999;
	border-radius: 7px;
	font-size: 33px;
	line-height: 36px;
`;

const HeaderIcons = styled.div`
	display: flex;
	align-items: center;
	height: 122px;
	width: 335px;
	gap: 45px;
`;

interface CaretProps {
	$size: number;
	$height: number;
	$color: string;
	$left?: number;
}

const Caret = styled.i<CaretProps>`
	border: ${(p) => p.$size}px solid transparent;
	border-top: ${(p) => p.$height}px solid ${(p) => p.$color};
	border-bottom: 0;
	margin-left: ${(p) => p.$left || 0}px;
`;

const Quote = styled.section`
	padding: 15px 26px 0;
	height: 452px;
	border-bottom: 1.5px solid var(--line);
`;

const QuoteTop = styled.div`
	display: flex;
	height: 160px;
`;

const PriceBox = styled.div`
	width: 295px;
	color: var(--red);
`;

const Price = styled.div`
	height: 104px;
	padding-left: 3px;
	color: #de3b33;
	font-size: 95px;
	font-weight: 500;
	letter-spacing: -3.6px;
	line-height: 106px;
`;

const Change = styled.div`
	display: flex;
	justify-content: space-between;
	width: 268px;
	font-size: 46px;
	line-height: 60px;
`;

const Stats = styled.div`
	display: grid;
	grid-template-columns: repeat(3, 264px);
	grid-auto-rows: 81px;
	column-gap: 29.5px;
`;

const StatRow = styled.div`
	display: flex;
	align-items: center;
	justify-content: space-between;
`;

const StatLabel = styled.span`
	color: var(--gray);
	font-size: 45px;
`;

const StatValue = styled.span<{ $up?: boolean }>`
	font-size: 46px;
	letter-spacing: 0.3px;
	color: ${(p) => (p.$up ? 'var(--red)' : 'var(--ink)')};
`;

const Estimates = styled.div`
	display: flex;
	align-items: center;
	height: 82px;
	margin-bottom: 12px;
`;

const Estimate = styled.div<{ $width: number }>`
	display: flex;
	align-items: center;
	width: ${(p) => p.$width}px;
`;

const Small = styled.span`
	color: var(--gray);
	font-size: 33px;
`;

interface FigureProps {
	$size: number;
	$red?: boolean;
	$left?: number;
	$spacing?: number;
}

const Figure = styled.span<FigureProps>`
	margin-left: ${(p) => p.$left ?? 11}px;
	font-size: ${(p) => p.$size}px;
	letter-spacing: ${(p) => p.$spacing || 0}px;
	color: ${(p) => (p.$red ? 'var(--red)' : 'var(--ink)')};
`;

const MoreButton = styled.button`
	width: 134px;
	height: 59px;
	flex: none;
	padding: 0;
	border: 1.5px solid #e2e3e5;
	border-radius: 7px;
	background: none;
	color: var(--ink);
	font: inherit;
	font-size: 38px;
`;

const Track = styled.div`
	display: flex;
	align-items: center;
	height: 91px;
	padding-left: 1px;
	border-top: 2px solid #f4f4f5;
`;

interface TrackTextProps {
	$width: number;
	$gray?: boolean;
	$red?: boolean;
	$left?: number;
	$spacing?: number;
}

const TrackText = styled.span<TrackTextProps>`
	flex: none;
	width: ${(p) => p.$width}px;
	margin-left: ${(p) => p.$left || 0}px;
	font-size: 39px;
	letter-spacing: ${(p) => p.$spacing || 0}px;
	color: ${(p) => (p.$red ? 'var(--red)' : p.$gray ? 'var(--gray)' : 'var(--ink)')};
`;

const HelpMark = styled.span`
	width: 36px;
	height: 36px;
	border: 2.5px solid #999;
	border-radius: 50%;
	color: #999;
	font-size: 27px;
	line-height: 32px;
	text-align: center;
`;

const PeriodTabs = styled.nav`
	display: flex;
	align-items: center;
	height: 113px;
	padding-left: 41px;
	border-bottom: 1.5px solid var(--line);
`;

const underline = css`
	&::after {
		content: '';
		position: absolute;
		bottom: 9px;
		width: 65px;
		height: 8px;
		border-radius: 4px;
		background: var(--orange);
	}
`;

const Period = styled.div<{ $width: number; $active?: boolean }>`
	position: relative;
	display: flex;
	align-items: center;
	height: 112px;
	width: ${(p) => p.$width}px;
	font-size: 47px;
	color: ${(p) => (p.$active ? 'var(--orange)' : 'var(--gray)')};
	${(p) => p.$active && underline}

	&::after {
		left: 4px;
	}
`;

const Indicators = styled.div`
	display: flex;
	align-items: center;
	height: 66px;
	padding: 2px 16px 0;
`;

const Select = styled.div<{ $width: number; $corner?: boolean }>`
	position: relative;
	flex: none;
	display: flex;
	align-items: center;
	padding-left: ${(p) => (p.$corner ? 13 : 8)}px;
	width: ${(p) => p.$width}px;
	height: 49px;
	border: 1.5px solid #dfe0e4;
	border-radius: 7px;
	background: #f6f7fa;
	font-size: 38.5px;

	${(p) =>
		p.$corner &&
		css`
			&::after {
				content: '';
				position: absolute;
				right: 6px;
				bottom: 6px;
				border: 6.5px solid transparent;
				border-right-color: var(--ink);
				border-bottom-color: var(--ink);
			}
		`}
`;

interface IndicatorProps {
	$width: number;
	$color?: string;
	$left?: number;
	$size?: number;
}

const Indicator = styled.span<IndicatorProps>`
	flex: none;
	display: flex;
	align-items: center;
	width: ${(p) => p.$width}px;
	margin-left: ${(p) => p.$left || 0}px;
	font-size: ${(p) => p.$size || 40}px;
	color: ${(p) => p.$color || 'var(--ink)'};
`;

const Up = styled.span`
	width: 40px;
	text-align: center;
`;

const Adjust = styled.div`
	flex: none;
	width: 143px;
	height: 48px;
	margin-left: 40px;
	border-radius: 6px;
	background: var(--orange);
	color: #fff3e8;
	font-size: 38px;
	line-height: 46px;
	text-align: center;
`;

const ChartBox = styled.div`
	position: relative;
`;

const Controls = styled.div`
	position: absolute;
	left: 45px;
	top: 678px;
	display: flex;
	gap: 117.8px;
`;

const Control = styled.div<{ $muted?: boolean }>`
	width: 74px;
	height: 74px;
	border-radius: 50%;
	background: ${(p) => (p.$muted ? 'rgba(120, 120, 120, 0.09)' : 'rgba(225, 110, 50, 0.1)')};

	path {
		fill: none;
		stroke: ${(p) => (p.$muted ? '#666' : '#cd6431')};
		stroke-width: 3.2;
	}
`;

const VolumeBar = styled.div`
	display: flex;
	align-items: center;
	height: 66px;
	padding-left: 17px;
`;

const Collapse = styled.div`
	flex: none;
	display: grid;
	place-content: center;
	width: 49px;
	height: 66px;
	border-radius: 12px 0 0 12px;
	background: #999;
`;

const Dates = styled.div`
	display: flex;
	width: 1176px;
	height: 91px;
	margin-left: 12px;
	background: #f7f7fa;
`;

const DateLabel = styled.span<{ $left: number; $tick?: number }>`
	position: relative;
	flex: none;
	width: 173px;
	margin-left: ${(p) => p.$left}px;
	font-size: 39.5px;
	line-height: 77px;
	color: var(--gray);
	letter-spacing: -0.3px;

	${(p) =>
		p.$tick &&
		css`
			&::before {
				content: '';
				position: absolute;
				top: 0;
				left: ${p.$tick}px;
				width: 3px;
				height: 16px;
				background: #666;
			}
		`}
`;

const Notice = styled.div`
	display: flex;
	align-items: center;
	height: 98px;
	margin: 19px 20px;
	padding-left: 33px;
	border-radius: 49px;
	background: #fbece4;
	color: #cd6431;
`;

const NoticeText = styled.span`
	width: 925px;
	margin-left: 57px;
	font-size: 42px;
`;

const Angles = styled.span`
	font-size: 46px;
	letter-spacing: 2.5px;
	line-height: 0;
`;

const NoticeClose = styled.div`
	display: flex;
	align-items: center;
	height: 38px;
	padding-left: 17px;
	border-left: 1.5px solid #cd6431;
`;

const Sections = styled.nav`
	display: flex;
	height: 114px;
	padding-left: 44px;
	border-top: 1.5px solid var(--line);
	border-bottom: 1.5px solid var(--line);
`;

const Section = styled.div<{ $active?: boolean }>`
	position: relative;
	display: flex;
	align-items: center;
	justify-content: center;
	width: 185.3px;
	font-size: 47px;
	color: ${(p) => (p.$active ? 'var(--orange)' : 'var(--gray)')};
	${(p) => p.$active && underline}
`;

const Cards = styled.div`
	display: flex;
	gap: 20px;
	margin: 13px 0 0 39px;
`;

const Card = styled.div<{ $split?: boolean }>`
	flex: none;
	width: 511px;
	height: 60px;
	border-radius: 24px;
	background: ${(p) => (p.$split ? 'linear-gradient(90deg, #fdf5f1 263px, #fbefec 263px)' : '#fdf6f2')};
`;
